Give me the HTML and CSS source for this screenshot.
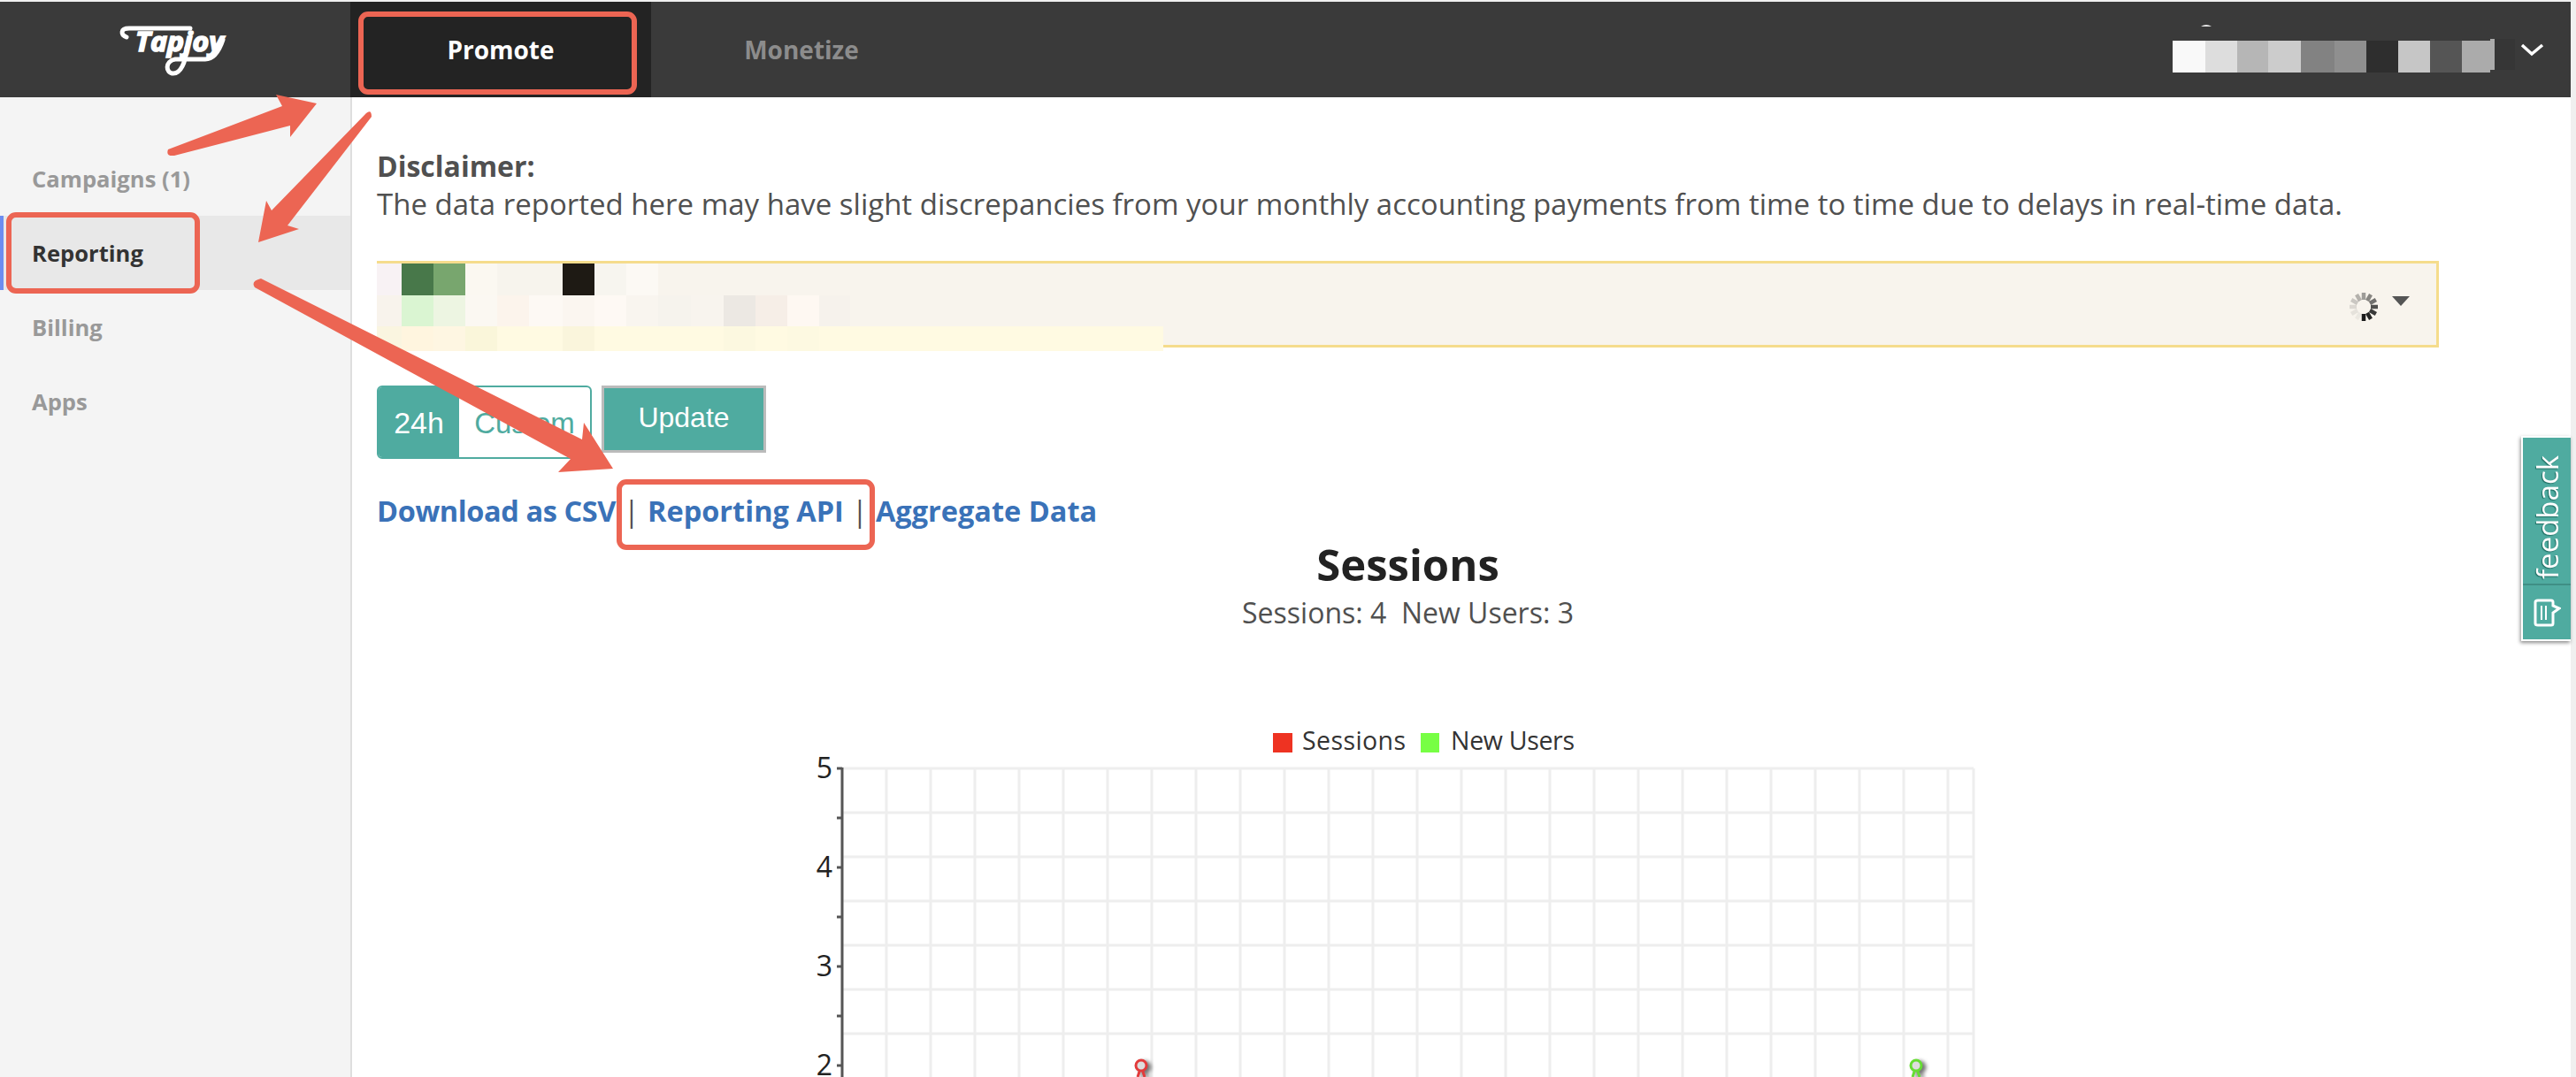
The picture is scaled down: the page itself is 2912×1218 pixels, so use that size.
FILE: index.html
```html
<!DOCTYPE html>
<html lang="en">
<head>
<meta charset="utf-8">
<title>Tapjoy Reporting</title>
<link rel="stylesheet" href="styles.css">
</head>
<body>
<div class="page">
  <header class="topbar">
    <div class="logo">
      <svg class="logo-svg" viewBox="130 24 130 66" width="130" height="66">
        <path class="logo-stroke" d="M143 43 C136 40 136 33 146 33 L215 33"/>
        <path class="logo-stroke" d="M211 55 C210 72 204 84 196 84 C187 84 186 70 198 68 L232 68 C242 68 248 58 252 46"/>
        <text class="logo-text" x="153" y="59" textLength="100" lengthAdjust="spacingAndGlyphs">Tapjoy</text>
      </svg>
    </div>
    <nav class="tabs">
      <a class="tab tab-active">Promote</a>
      <a class="tab">Monetize</a>
    </nav>
    <div class="user">
      <svg class="user-svg" viewBox="2456 21 424 70" width="424" height="70">
        <path d="M2488 30 Q2494 26 2500 30 Z" fill="#e8e8e8"/>
        <rect x="2456" y="46" width="37" height="36" fill="#f9f9f9"/>
        <rect x="2493" y="46" width="36" height="36" fill="#dddddd"/>
        <rect x="2529" y="46" width="35" height="36" fill="#b6b6b6"/>
        <rect x="2564" y="46" width="37" height="36" fill="#cccccc"/>
        <rect x="2601" y="46" width="38" height="36" fill="#828282"/>
        <rect x="2639" y="46" width="36" height="36" fill="#8f8f8f"/>
        <rect x="2675" y="46" width="36" height="36" fill="#2e2e2e"/>
        <rect x="2711" y="46" width="36" height="36" fill="#c6c6c6"/>
        <rect x="2747" y="46" width="36" height="36" fill="#555555"/>
        <rect x="2783" y="46" width="32" height="36" fill="#ababab"/>
        <rect x="2815" y="44" width="5" height="35" fill="#ababab"/>
        <rect x="2820" y="44" width="23" height="35" fill="#363636"/>
        <path class="chevron" d="M2851 51 L2862 61 L2874 51"/>
      </svg>
    </div>
  </header>
  <div class="layout">
    <aside class="sidebar">
      <a class="nav-item">Campaigns (1)</a>
      <a class="nav-item nav-active">Reporting</a>
      <a class="nav-item">Billing</a>
      <a class="nav-item">Apps</a>
    </aside>
    <main class="content">
      <p class="disclaimer"><strong class="disclaimer-head">Disclaimer:</strong><br>The data reported here may have slight discrepancies from your monthly accounting payments from time to time due to delays in real-time data.</p>
      <div class="selector">
        <svg class="mosaic" viewBox="426 298 889 99" width="889" height="99" shape-rendering="crispEdges">
          <rect x="426" y="298" width="28" height="36" fill="#f8f2f4"/>
          <rect x="454" y="298" width="36" height="36" fill="#48784a"/>
          <rect x="490" y="298" width="36" height="36" fill="#78a66e"/>
          <rect x="526" y="298" width="36" height="36" fill="#fbf8f1"/>
          <rect x="562" y="298" width="74" height="36" fill="#f7f4ed"/>
          <rect x="636" y="298" width="36" height="36" fill="#1e1a14"/>
          <rect x="672" y="298" width="36" height="36" fill="#f7f5ef"/>
          <rect x="708" y="298" width="36" height="36" fill="#fcf9f4"/>
          <rect x="426" y="334" width="28" height="35" fill="#f8f3ec"/>
          <rect x="454" y="334" width="36" height="35" fill="#daf5d2"/>
          <rect x="490" y="334" width="36" height="35" fill="#edf5e2"/>
          <rect x="526" y="334" width="36" height="35" fill="#fbf8f2"/>
          <rect x="562" y="334" width="36" height="35" fill="#fcf4ec"/>
          <rect x="598" y="334" width="38" height="35" fill="#fdf9f4"/>
          <rect x="636" y="334" width="36" height="35" fill="#fbf6f0"/>
          <rect x="672" y="334" width="36" height="35" fill="#fef9f4"/>
          <rect x="708" y="334" width="36" height="35" fill="#f9f5ef"/>
          <rect x="744" y="334" width="37" height="35" fill="#f6f3ed"/>
          <rect x="781" y="334" width="37" height="35" fill="#f8f4ee"/>
          <rect x="818" y="334" width="36" height="35" fill="#ece8e3"/>
          <rect x="854" y="334" width="36" height="35" fill="#f6eee7"/>
          <rect x="890" y="334" width="36" height="35" fill="#fef8f2"/>
          <rect x="926" y="334" width="35" height="35" fill="#f6f2ec"/>
          <rect x="426" y="369" width="889" height="28" fill="#fffae2"/>
          <rect x="426" y="369" width="28" height="28" fill="#faf5e0"/>
          <rect x="454" y="369" width="36" height="28" fill="#fff5df"/>
          <rect x="490" y="369" width="36" height="28" fill="#fef6e2"/>
          <rect x="526" y="369" width="36" height="28" fill="#faf6da"/>
          <rect x="636" y="369" width="36" height="28" fill="#faf5dc"/>
          <rect x="818" y="369" width="36" height="28" fill="#fcf8e0"/>
          <rect x="890" y="369" width="36" height="28" fill="#fdf9e1"/>
        </svg>
        <svg class="spinner" viewBox="-18 -18 36 36" width="36" height="36">
          <g class="spinner-ticks">
            <line x1="0" y1="8" x2="0" y2="16" opacity="1"/>
            <line x1="0" y1="8" x2="0" y2="16" opacity=".95" transform="rotate(-30)"/>
            <line x1="0" y1="8" x2="0" y2="16" opacity=".85" transform="rotate(-60)"/>
            <line x1="0" y1="8" x2="0" y2="16" opacity=".75" transform="rotate(-90)"/>
            <line x1="0" y1="8" x2="0" y2="16" opacity=".6" transform="rotate(-120)"/>
            <line x1="0" y1="8" x2="0" y2="16" opacity=".5" transform="rotate(-150)"/>
            <line x1="0" y1="8" x2="0" y2="16" opacity=".4" transform="rotate(180)"/>
            <line x1="0" y1="8" x2="0" y2="16" opacity=".3" transform="rotate(150)"/>
            <line x1="0" y1="8" x2="0" y2="16" opacity=".2" transform="rotate(120)"/>
            <line x1="0" y1="8" x2="0" y2="16" opacity=".12" transform="rotate(90)"/>
            <line x1="0" y1="8" x2="0" y2="16" opacity=".08" transform="rotate(60)"/>
            <line x1="0" y1="8" x2="0" y2="16" opacity=".05" transform="rotate(30)"/>
          </g>
        </svg>
        <span class="caret"></span>
      </div>
      <div class="controls">
        <div class="segment">
          <span class="seg seg-on">24h</span>
          <span class="seg">Custom</span>
        </div>
        <button class="update">Update</button>
      </div>
      <div class="links">
        <a class="link link-tight">Download as CSV</a>
        <span class="sep">|</span>
        <a class="link">Reporting API</a>
        <span class="sep">|</span>
        <a class="link">Aggregate Data</a>
      </div>
      <h1 class="title">Sessions</h1>
      <p class="subtitle">Sessions: 4&nbsp; New Users: 3</p>
      <svg class="chart" viewBox="426 720 2331 498" width="2331" height="498">
        <rect x="1439" y="829" width="22" height="22" fill="#ee3322"/>
        <text class="legend" x="1472" y="848" textLength="117">Sessions</text>
        <rect x="1606" y="829" width="21" height="22" fill="#77ff44"/>
        <text class="legend" x="1640" y="848" textLength="140">New Users</text>
        <g class="grid">
          <line x1="952" y1="869" x2="2231" y2="869"/>
          <line x1="952" y1="919" x2="2231" y2="919"/>
          <line x1="952" y1="969" x2="2231" y2="969"/>
          <line x1="952" y1="1019" x2="2231" y2="1019"/>
          <line x1="952" y1="1069" x2="2231" y2="1069"/>
          <line x1="952" y1="1119" x2="2231" y2="1119"/>
          <line x1="952" y1="1169" x2="2231" y2="1169"/>
          <line x1="1002" y1="869" x2="1002" y2="1218"/>
          <line x1="1052" y1="869" x2="1052" y2="1218"/>
          <line x1="1102" y1="869" x2="1102" y2="1218"/>
          <line x1="1152" y1="869" x2="1152" y2="1218"/>
          <line x1="1202" y1="869" x2="1202" y2="1218"/>
          <line x1="1252" y1="869" x2="1252" y2="1218"/>
          <line x1="1302" y1="869" x2="1302" y2="1218"/>
          <line x1="1352" y1="869" x2="1352" y2="1218"/>
          <line x1="1402" y1="869" x2="1402" y2="1218"/>
          <line x1="1452" y1="869" x2="1452" y2="1218"/>
          <line x1="1502" y1="869" x2="1502" y2="1218"/>
          <line x1="1552" y1="869" x2="1552" y2="1218"/>
          <line x1="1602" y1="869" x2="1602" y2="1218"/>
          <line x1="1652" y1="869" x2="1652" y2="1218"/>
          <line x1="1702" y1="869" x2="1702" y2="1218"/>
          <line x1="1752" y1="869" x2="1752" y2="1218"/>
          <line x1="1802" y1="869" x2="1802" y2="1218"/>
          <line x1="1852" y1="869" x2="1852" y2="1218"/>
          <line x1="1902" y1="869" x2="1902" y2="1218"/>
          <line x1="1952" y1="869" x2="1952" y2="1218"/>
          <line x1="2002" y1="869" x2="2002" y2="1218"/>
          <line x1="2052" y1="869" x2="2052" y2="1218"/>
          <line x1="2102" y1="869" x2="2102" y2="1218"/>
          <line x1="2152" y1="869" x2="2152" y2="1218"/>
          <line x1="2202" y1="869" x2="2202" y2="1218"/>
          <line x1="2231" y1="869" x2="2231" y2="1218"/>
        </g>
        <g class="axis">
          <line x1="952" y1="868" x2="952" y2="1218"/>
          <line x1="946" y1="869" x2="952" y2="869"/>
          <line x1="946" y1="981" x2="952" y2="981"/>
          <line x1="946" y1="1093" x2="952" y2="1093"/>
          <line x1="946" y1="1205" x2="952" y2="1205"/>
          <line x1="946" y1="925" x2="952" y2="925"/>
          <line x1="946" y1="1037" x2="952" y2="1037"/>
          <line x1="946" y1="1149" x2="952" y2="1149"/>
        </g>
        <text class="tick" x="941" y="880">5</text>
        <text class="tick" x="941" y="992">4</text>
        <text class="tick" x="941" y="1104">3</text>
        <text class="tick" x="941" y="1216">2</text>
        <g class="shadowed">
          <path class="pin-red" d="M1288 1212 L1286 1218 M1292 1212 L1294 1218"/>
          <circle class="pin-red-dot" cx="1290" cy="1205" r="6"/>
          <path class="pin-green" d="M2164 1212 L2162 1218 M2168 1212 L2170 1218"/>
          <circle class="pin-green-dot" cx="2166" cy="1205" r="6"/>
        </g>
      </svg>
    </main>
  </div>
</div>
<aside class="feedback">
  <span class="feedback-label">feedback</span>
  <span class="feedback-icon">
    <svg viewBox="0 0 32 34" width="32" height="34">
      <path class="fb-icon" d="M6 3 H21 Q23 3 23 5 V9 L30 12 L23 17 V29 Q23 31 21 31 H6 Q3 31 3 29 V5 Q3 3 6 3 Z"/>
      <path class="fb-icon-thin" d="M10 9 V25 M15 9 V25"/>
    </svg>
  </span>
</aside>
<svg class="annotations" viewBox="0 0 2912 1218" width="2912" height="1218">
  <g class="note-arrows">
    <path d="M190 169 L319 120 L312 107 L358 117 L328 155 L328 142 L197 176 Q187 177 190 169 Z"/>
    <path d="M414 128 L307 238 L301 227 L292 274 L338 259 L325 255 L420 132 Q420 123 414 128 Z"/>
    <path d="M295 315 L658 497 L660 478 L693 530 L631 534 L645 519 L288 325 Q283 318 295 315 Z"/>
  </g>
  <g class="note-boxes">
    <rect x="408" y="16" width="309" height="88" rx="8"/>
    <rect x="10" y="243" width="213" height="86" rx="8"/>
    <rect x="700" y="545" width="286" height="74" rx="8"/>
  </g>
</svg>
</body>
</html>
```
FILE: styles.css
```css
* { box-sizing: border-box; }
html, body { margin: 0; height: 100%; }
body {
  width: 2912px;
  height: 1218px;
  overflow: hidden;
  padding: 2px 6px 0 0;
  background: #f0f0f0;
  position: relative;
  font-family: "Open Sans", "Noto Sans", sans-serif;
  color: #505050;
}
.page { width: 2906px; height: 1216px; display: flex; flex-direction: column; background: #fff; }

.topbar { height: 108px; flex: none; display: flex; background: #3a3a3a; }
.logo { width: 396px; flex: none; display: flex; align-items: center; padding-left: 130px; }
.logo-svg { display: block; overflow: visible; }
.logo-stroke { fill: none; stroke: #fff; stroke-width: 5; stroke-linecap: round; }
.logo-text { font-family: "Open Sans", sans-serif; font-style: italic; font-weight: 700; font-size: 31px; fill: #fff; stroke: #fff; stroke-width: 1.6; }
.tabs { display: flex; }
.tab { width: 340px; display: flex; align-items: center; justify-content: center; font-size: 28px; font-weight: 700; color: #8c8c8c; }
.tab-active { background: #232323; color: #fff; }
.user { margin-left: auto; display: flex; align-items: center; padding-right: 26px; }
.user-svg { display: block; }
.chevron { fill: none; stroke: #fff; stroke-width: 3.5; }

.layout { flex: 1; display: flex; min-height: 0; }
.sidebar { width: 398px; flex: none; padding-top: 50px; background: #f4f4f4; border-right: 2px solid #dedede; }
.nav-item { height: 84px; display: flex; align-items: center; padding-left: 36px; font-size: 25.6px; font-weight: 700; color: #999; }
.nav-active { background: #e8e8e8; color: #333; box-shadow: inset 4px 0 0 #6d8df0; }

.content { width: 2331px; margin-left: 28px; flex: none; }
.disclaimer { margin: 56px 0 0; font-size: 33px; line-height: 43px; color: #505050; }
.disclaimer-head { font-size: 32px; }
.selector { position: relative; height: 98px; margin-top: 43px; background: #f8f4ed; border: 3px solid #f5dc8c; border-left-width: 1px; display: flex; justify-content: flex-end; align-items: flex-start; padding-right: 30px; }
.mosaic { position: absolute; left: -1px; top: 0; display: block; }
.spinner { margin-top: 31px; margin-right: 14px; display: block; }
.spinner-ticks line { stroke: #1a1a1a; stroke-width: 4.5; }
.caret { margin-top: 37px; width: 0; height: 0; border-left: 10px solid transparent; border-right: 10px solid transparent; border-top: 11px solid #555; }

.controls { display: flex; gap: 11px; margin-top: 43px; align-items: flex-start; }
.segment { width: 243px; height: 83px; display: flex; border: 2px solid #4faba0; border-radius: 6px; overflow: hidden; font-family: "Liberation Sans", sans-serif; font-size: 33px; }
.seg { flex: 1; display: flex; align-items: center; justify-content: center; color: #4faba0; padding-top: 2px; }
.seg-on { flex: none; width: 91px; background: #4faba0; color: #fff; font-size: 34px; }
.update { width: 186px; height: 76px; padding: 0 0 4px; background: #4faba0; border: 3px solid #bbb; color: #fff; font-family: "Liberation Sans", sans-serif; font-size: 32px; }

.links { margin-top: 37px; height: 44px; display: flex; align-items: center; font-size: 32.5px; line-height: 44px; }
.link { font-weight: 700; color: #3a72b8; }
.link-tight { letter-spacing: -0.4px; }
.sep { width: 36px; text-align: center; font-weight: 400; }

.title { margin: 3px 0 0; text-align: center; font-size: 49px; line-height: 70px; font-weight: 700; color: #222; }
.subtitle { margin: 0; text-align: center; font-size: 32px; line-height: 40px; }
.chart { display: block; margin-top: 7px; }
.legend { font-family: "Open Sans", sans-serif; font-size: 28.5px; fill: #333; }
.tick { font-family: "Open Sans", sans-serif; font-size: 32px; fill: #222; text-anchor: end; }
.grid line { stroke: #eeeeee; stroke-width: 3; }
.axis line { stroke: #555; stroke-width: 3; }
.shadowed { filter: drop-shadow(4px 2px 2px rgba(0,0,0,.55)); }
.pin-red, .pin-red-dot { stroke: #e23b3b; stroke-width: 3; fill: none; }
.pin-red-dot { fill: #ddd; }
.pin-green, .pin-green-dot { stroke: #66dd33; stroke-width: 3; fill: none; }
.pin-green-dot { fill: #ddd; }

.feedback { position: absolute; left: 2850px; top: 493px; width: 56px; height: 232px; display: flex; flex-direction: column; background: #4faba0; border: 2px solid #fff; border-right: 0; box-shadow: -1px 2px 4px rgba(0,0,0,.45); }
.feedback-label { height: 167px; flex: none; writing-mode: vertical-rl; transform: rotate(180deg); display: flex; align-items: center; justify-content: flex-start; padding-top: 5px; color: #fff; font-size: 33px; text-shadow: -1px -1px 1px rgba(0,70,60,.6); border-top: 2px solid #3f8f85; }
.feedback-icon { flex: 1; display: flex; align-items: center; justify-content: center; }
.fb-icon { fill: none; stroke: #fff; stroke-width: 3; }
.fb-icon-thin { fill: none; stroke: #fff; stroke-width: 2; }

.annotations { position: absolute; left: 0; top: 0; pointer-events: none; }
.note-arrows path { fill: #ec6553; }
.note-boxes rect { fill: none; stroke: #ec6553; stroke-width: 6; }
```
